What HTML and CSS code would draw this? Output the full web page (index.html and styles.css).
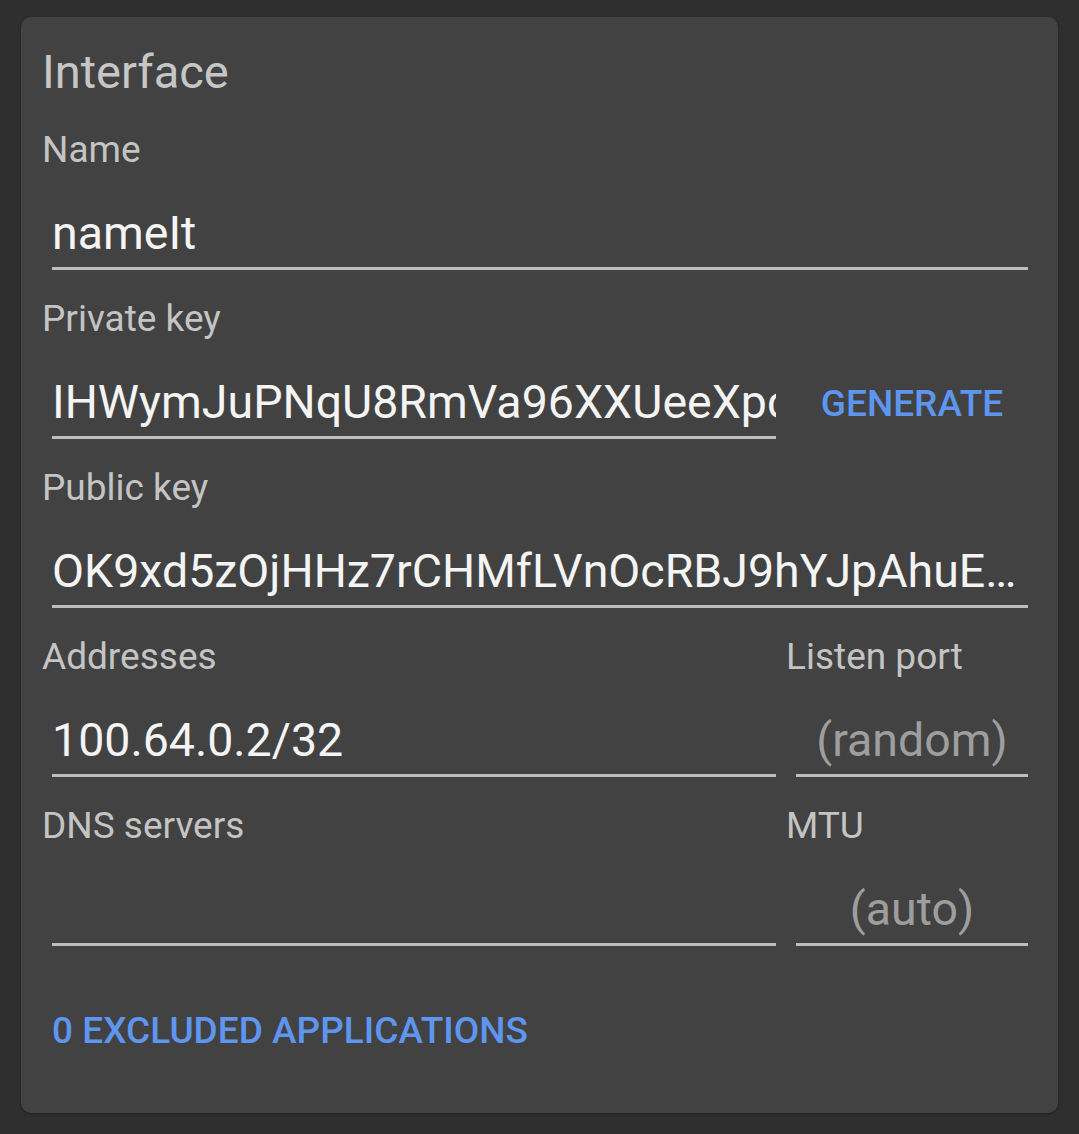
FILE: index.html
```html
<!DOCTYPE html>
<html lang="en">
<head>
<meta charset="utf-8">
<title>Interface</title>
<link rel="stylesheet" href="styles.css">
</head>
<body>
<section class="card">
  <h1 class="title">Interface</h1>

  <div class="field">
    <label class="label">Name</label>
    <div class="input"><span class="value">nameIt</span></div>
  </div>

  <div class="grid field">
    <div class="cell">
      <label class="label">Private key</label>
      <div class="input clip"><span class="value">IHWymJuPNqU8RmVa96XXUeeXpc</span></div>
    </div>
    <div class="cell">
      <button class="btn gen">GENERATE</button>
    </div>
  </div>

  <div class="field">
    <label class="label">Public key</label>
    <div class="input ellipsis"><span class="value">OK9xd5zOjHHz7rCHMfLVnOcRBJ9hYJpAhuE…</span></div>
  </div>

  <div class="grid field">
    <div class="cell">
      <label class="label">Addresses</label>
      <div class="input"><span class="value">100.64.0.2/32</span></div>
    </div>
    <div class="cell">
      <label class="label">Listen port</label>
      <div class="input center"><span class="hint">(random)</span></div>
    </div>
  </div>

  <div class="grid field">
    <div class="cell">
      <label class="label">DNS servers</label>
      <div class="input"><span class="value"></span></div>
    </div>
    <div class="cell">
      <label class="label">MTU</label>
      <div class="input center"><span class="hint">(auto)</span></div>
    </div>
  </div>

  <button class="btn excluded">0 EXCLUDED APPLICATIONS</button>
</section>
</body>
</html>
```

FILE: styles.css
```css
html, body {
  margin: 0;
  padding: 0;
  background: #2f2f2f;
}

body {
  font-family: Roboto, "Liberation Sans", sans-serif;
  width: 1079px;
  height: 1134px;
  overflow: hidden;
}

.card {
  box-sizing: border-box;
  margin: 17px 0 0 21px;
  width: 1037px;
  height: 1096px;
  padding: 27px 30px 0 22px;
  background: #424242;
  border-radius: 10px;
  box-shadow: 0 1px 3px rgba(0, 0, 0, 0.35);
}

.title {
  margin: 0 0 26px -1px;
  font-size: 47px;
  line-height: 56px;
  font-weight: 400;
  color: #c6c6c6;
}

.field {
  margin-bottom: 25px;
}

.grid {
  display: grid;
  grid-template-columns: 733px 241px;
  column-gap: 11px;
}

.label {
  display: block;
  margin-left: -1px;
  padding-top: 2px;
  font-size: 37px;
  line-height: 44px;
  color: #c4c4c4;
  white-space: nowrap;
}

.input {
  margin: 33px 0 0 9px;
  height: 56px;
  padding-bottom: 6px;
  border-bottom: 3px solid #bdbdbd;
  font-size: 46.5px;
  line-height: 56px;
  color: #f4f4f4;
  white-space: nowrap;
  overflow: hidden;
}

.clip {
  text-overflow: clip;
}

.ellipsis {
  text-overflow: ellipsis;
}

.center {
  text-align: center;
}

.hint {
  color: #9e9e9e;
}

.btn {
  display: block;
  border: 0;
  background: transparent;
  padding: 0;
  font-family: Roboto, "Liberation Sans", sans-serif;
  font-weight: 500;
  font-size: 37px;
  color: #5e96ef;
  letter-spacing: 0;
  white-space: nowrap;
}

.gen {
  margin: 81px 0 0 9px;
  width: 232px;
  height: 56px;
  line-height: 56px;
  text-align: center;
}

.excluded {
  margin: 63px 0 0 9px;
  line-height: 44px;
  text-align: left;
}
```
